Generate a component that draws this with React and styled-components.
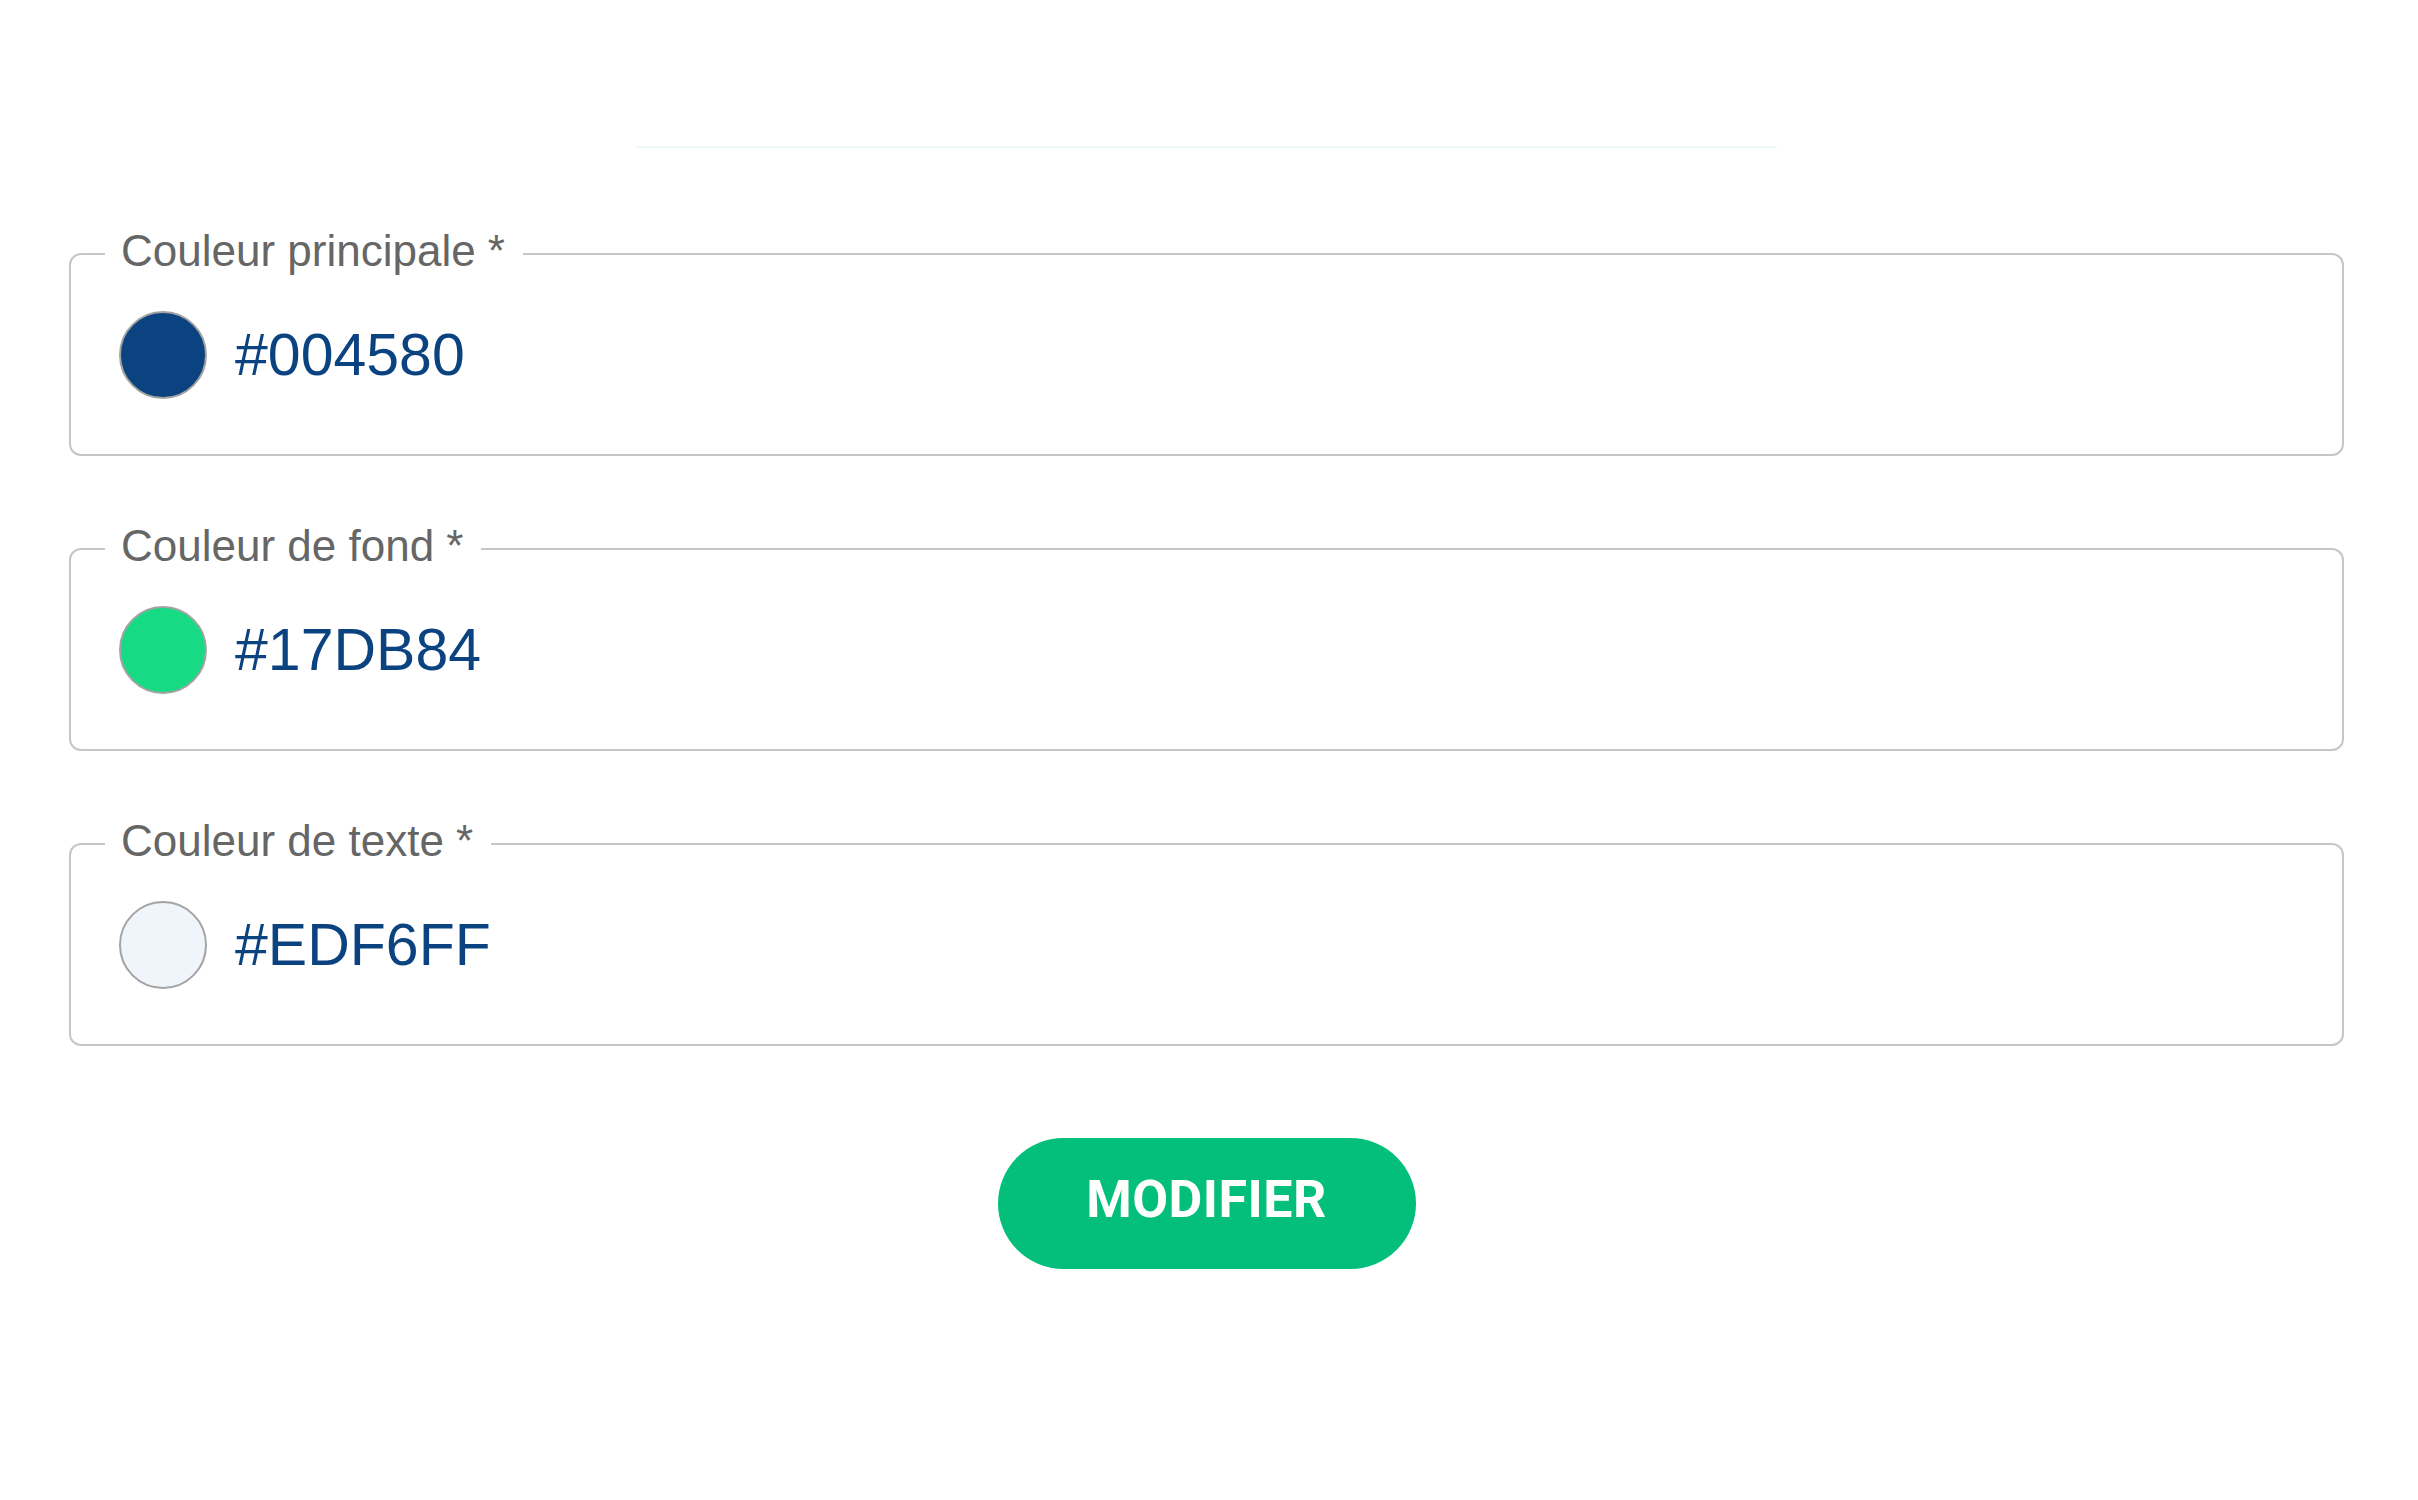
import React from 'react';
import styled, { createGlobalStyle } from 'styled-components';

const GlobalStyle = createGlobalStyle`
  html, body {
    margin: 0;
    padding: 0;
    background: #ffffff;
  }
  body {
    font-family: "Liberation Sans", Arial, sans-serif;
  }
`;

const colors = [
  { label: 'Couleur principale *', value: '#004580', swatch: '#0b4380' },
  { label: 'Couleur de fond *', value: '#17DB84', swatch: '#17DB84' },
  { label: 'Couleur de texte *', value: '#EDF6FF', swatch: '#EFF5FB' },
];

const Page = styled.main`
  width: 2275px;
  margin-left: 69px;
  padding-top: 146px;
  display: flex;
  flex-direction: column;
`;

const Indicator = styled.div`
  align-self: center;
  width: 1141px;
  height: 2px;
  background: #eef9fc;
  margin-bottom: 81px;
`;

const Fields = styled.div`
  display: flex;
  flex-direction: column;
  gap: 68px;
`;

const Field = styled.fieldset`
  margin: 0;
  padding: 0 0 23px 48px;
  border: 2px solid #c6c6c6;
  border-radius: 12px;
  min-width: 0;
`;

const Legend = styled.legend`
  margin-left: -14px;
  padding: 0 18px 6px 16px;
  font-family: "Liberation Sans", Arial, sans-serif;
  font-size: 44px;
  line-height: 44px;
  color: #666666;
`;

const Row = styled.div`
  height: 152px;
  display: flex;
  align-items: center;
  gap: 28px;
`;

const Swatch = styled.span`
  width: 84px;
  height: 84px;
  border-radius: 50%;
  border: 2px solid #a3a3a3;
  background: ${({ $color }) => $color};
  flex: none;
`;

const Hex = styled.span`
  font-family: "Liberation Sans", Arial, sans-serif;
  font-size: 59px;
  color: #0b4380;
  line-height: 1;
`;

const Submit = styled.button`
  align-self: center;
  margin-top: 92px;
  width: 418px;
  height: 131px;
  border: none;
  border-radius: 66px;
  background: #04bf7b;
  color: #ffffff;
  font-family: Roboto, "Liberation Sans", sans-serif;
  font-weight: 700;
  font-size: 52px;
  letter-spacing: 0.5px;
  padding: 0 0 8px;
  cursor: pointer;
`;

const App = () => {
  return (
    <>
      <GlobalStyle />
      <Page>
        <Indicator />
        <Fields>
          {colors.map((c) => (
            <Field key={c.label}>
              <Legend>{c.label}</Legend>
              <Row>
                <Swatch $color={c.swatch} />
                <Hex>{c.value}</Hex>
              </Row>
            </Field>
          ))}
        </Fields>
        <Submit type="button">MODIFIER</Submit>
      </Page>
    </>
  );
};

export default App;
